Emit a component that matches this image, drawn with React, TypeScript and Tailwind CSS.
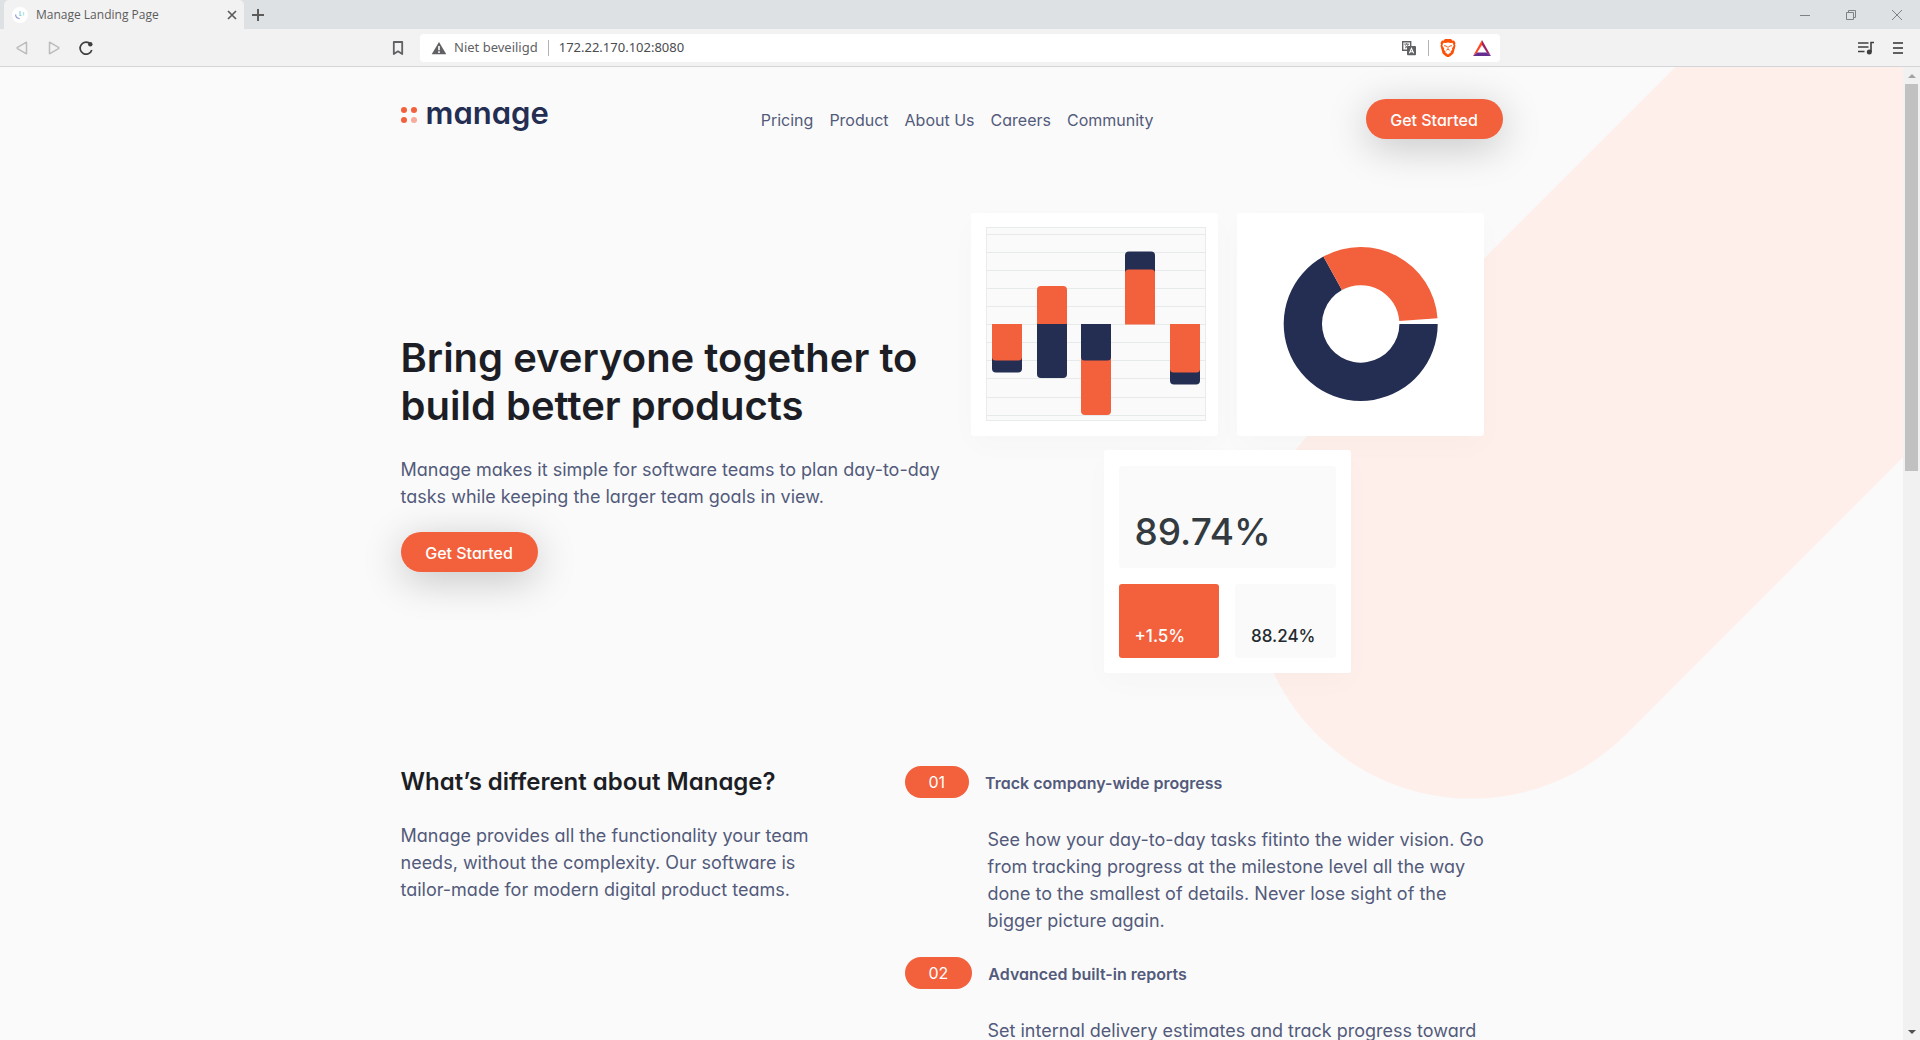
import type { ReactNode } from "react";

const NAV = ["Pricing", "Product", "About Us", "Careers", "Community"];

const GRID_LINES = [21, 39, 57, 75, 93, 111, 129, 147, 165, 184, 202];

const FEATURES = [
  {
    number: "01",
    title: "Track company-wide progress",
    lines: [
      "See how your day-to-day tasks fitinto the wider vision. Go",
      "from tracking progress at the milestone level all the way",
      "done to the smallest of details. Never lose sight of the",
      "bigger picture again.",
    ],
  },
  {
    number: "02",
    title: "Advanced built-in reports",
    lines: ["Set internal delivery estimates and track progress toward"],
  },
];

function Lines({ lines }: { lines: string[] }) {
  return (
    <>
      {lines.map((line) => (
        <span key={line} className="block whitespace-nowrap">
          {line}{" "}
        </span>
      ))}
    </>
  );
}

function TabStrip() {
  return (
    <div className="flex h-[29px] shrink-0 items-stretch bg-[#dee1e4] pl-1 text-[#5c5c5c]">
      <div className="flex w-60 items-center rounded-t-[5px] bg-[#f2f2f2] pr-1 pl-2">
        <svg className="size-4 shrink-0" viewBox="0 0 16 16" aria-hidden="true">
          <circle cx="8" cy="8" r="8" fill="#fff" />
          <path d="M3.500 7.500c.3 2.600 2 4 4.200 4.200" fill="none" stroke="#9aa3d8" strokeWidth="1.300" />
          <path d="M8 4v4.500h1.500" fill="none" stroke="#8fd0e6" strokeWidth="1.200" />
          <path d="M11.500 5v3.500" fill="none" stroke="#b5e6de" strokeWidth="1.400" />
        </svg>
        <span className="ml-2 flex-1 font-['Open_Sans',sans-serif] text-[12px] leading-4">Manage Landing Page</span>
        <button type="button" aria-label="Close tab" className="flex size-4 items-center justify-center">
          <svg className="size-[10px]" viewBox="0 0 10 10" stroke="currentColor" strokeWidth="1.700" aria-hidden="true">
            <path d="M1 1l8 8M9 1l-8 8" />
          </svg>
        </button>
      </div>
      <button type="button" aria-label="New tab" className="flex w-7 items-center justify-center">
        <svg className="size-3" viewBox="0 0 12 12" stroke="currentColor" strokeWidth="2" aria-hidden="true">
          <path d="M6 0v12M0 6h12" />
        </svg>
      </button>
      <div className="ml-auto flex text-[#7e8184]">
        <button type="button" aria-label="Minimize" className="flex w-[46px] items-center justify-center">
          <svg className="size-[10px]" viewBox="0 0 10 10" stroke="currentColor" aria-hidden="true">
            <path d="M0 5.500h10" />
          </svg>
        </button>
        <button type="button" aria-label="Restore" className="flex w-[46px] items-center justify-center">
          <svg className="size-[10px]" viewBox="0 0 10 10" fill="none" stroke="currentColor" aria-hidden="true">
            <path d="M.5 2.500h7v7h-7zM2.500 2.500v-2h7v7h-2" />
          </svg>
        </button>
        <button type="button" aria-label="Close window" className="flex w-[46px] items-center justify-center">
          <svg className="size-[10px]" viewBox="0 0 10 10" stroke="currentColor" aria-hidden="true">
            <path d="M0 0l10 10M10 0L0 10" />
          </svg>
        </button>
      </div>
    </div>
  );
}

function Toolbar() {
  return (
    <div className="grid h-[38px] shrink-0 grid-cols-[420px_1fr_420px] items-center border-b border-[#d3d5d8] bg-[#f2f2f2] font-['Noto_Sans',sans-serif] text-[13px] text-[#5f6164]">
      <div className="flex items-center pr-4 pl-4">
        <button type="button" aria-label="Back" className="text-[#bcbcbc]">
          <svg className="h-4 w-3" viewBox="0 0 12 16" fill="none" stroke="currentColor" strokeWidth="1.500" strokeLinejoin="round" aria-hidden="true">
            <path d="M10.500 2.200v11.600l-9-5.100q-.6-.7 0-1.400z" />
          </svg>
        </button>
        <button type="button" aria-label="Forward" className="ml-5 text-[#bcbcbc]">
          <svg className="h-4 w-3" viewBox="0 0 12 16" fill="none" stroke="currentColor" strokeWidth="1.500" strokeLinejoin="round" aria-hidden="true">
            <path d="M1.500 2.200v11.600l9-5.100q.6-.7 0-1.400z" />
          </svg>
        </button>
        <button type="button" aria-label="Reload" className="ml-[18px] text-[#3f3f3f]">
          <svg className="size-4" viewBox="0 0 16 16" fill="none" aria-hidden="true">
            <path d="M12.600 4.200A6 6 0 1 0 13.800 10" stroke="currentColor" strokeWidth="1.700" />
            <circle cx="12.300" cy="4.300" r="2.200" fill="currentColor" />
          </svg>
        </button>
        <button type="button" aria-label="Bookmark" className="ml-auto">
          <svg className="h-4 w-3" viewBox="0 0 12 16" fill="none" stroke="currentColor" strokeWidth="1.800" aria-hidden="true">
            <path d="M1.800 2h8.400v12L6 11.300 1.800 14z" strokeLinejoin="round" />
          </svg>
        </button>
      </div>
      <div className="flex h-7 items-center rounded bg-white pr-[9px] pl-[11px]">
        <svg className="h-[14px] w-4" viewBox="0 0 16 14" aria-hidden="true">
          <path d="M8 1l7.300 12.300H.7z" fill="#5f6164" />
          <path d="M8 5v4.200M8 10.200V12" stroke="#fff" strokeWidth="1.600" />
        </svg>
        <span className="ml-[7px]">Niet beveiligd</span>
        <span className="mx-[10px] h-4 w-px bg-[#b4b4b4]" />
        <input
          aria-label="Address"
          readOnly
          defaultValue="172.22.170.102:8080"
          className="min-w-0 flex-1 bg-transparent text-[#4a4c4f] outline-none"
        />
        <button type="button" aria-label="Translate">
          <svg className="size-4" viewBox="0 0 16 16" aria-hidden="true">
            <path d="M1.700 1.700h8v8.600h-8z" fill="#fff" stroke="#5f6164" strokeWidth="1.400" />
            <path d="M3.200 4.200h5M5.700 3v1.200M4 8c1.600-.6 2.600-1.800 3-3.600M4.400 5.400C5 6.800 6 7.500 7.600 8" fill="none" stroke="#5f6164" strokeWidth=".9" />
            <rect x="6" y="6" width="9" height="9.300" rx="1" fill="#5f6164" />
            <path d="M8.400 13.300l2.100-5 2.100 5M9.200 11.700h2.600" fill="none" stroke="#fff" strokeWidth="1.100" />
          </svg>
        </button>
        <span className="mx-[11px] h-4 w-px bg-[#b4b4b4]" />
        <button type="button" aria-label="Brave Shields">
          <svg className="h-[18px] w-4" viewBox="0 0 16 18" aria-hidden="true">
            <path d="M5 0h6l1.600 1.700 1.500-.2L15.500 4l-.5 1.500.5 1.200-2 7.600c-.3.900-3 2.700-4.100 3.400L8 18.300l-1.400-.6c-1.100-.7-3.800-2.500-4.100-3.400l-2-7.600L1 5.500.5 4l1.400-2.500 1.500.2z" fill="#fb5108" />
            <path d="M3.500 3.700l2 .4L8 3.400l2.500.7 2-.4 1.200 2.700-1.700 3.200.2 1.500-1.600 1.200.4 1L8 15.600l-2.800-2.300.4-1L4 11.100l.2-1.500-1.900-3.200z" fill="#fff" />
            <path d="M4 6.600l2.500.5-.4 1M12 6.600l-2.500.5.4 1M8 7v3M6.300 11.200L8 10.300l1.700.9" fill="none" stroke="#fb5108" strokeWidth=".9" />
          </svg>
        </button>
        <button type="button" aria-label="Brave Rewards" className="ml-[17px]">
          <svg className="h-4 w-[18px]" viewBox="0 0 18 16" aria-hidden="true">
            <path d="M9 0v5l-4.800 7.500L0 16z" fill="#ff4724" />
            <path d="M9 0l9 16-4.200-3.500L9 5z" fill="#9e1f63" />
            <path d="M0 16l4.200-3.500h9.600L18 16z" fill="#662d91" />
          </svg>
        </button>
      </div>
      <div className="flex items-center justify-end gap-[19px] pr-[17px]">
        <button type="button" aria-label="Media controls" className="text-[#3f3f3f]">
          <svg className="h-4 w-4" viewBox="0 0 16 16" aria-hidden="true">
            <path d="M0 3h10.500M0 7h10.500M0 11.500h6.500" stroke="currentColor" strokeWidth="1.700" />
            <path d="M16 2.500h-3V12" fill="none" stroke="currentColor" strokeWidth="1.600" />
            <circle cx="11.300" cy="12" r="2.500" fill="currentColor" />
          </svg>
        </button>
        <button type="button" aria-label="Menu">
          <svg className="h-4 w-[10px]" viewBox="0 0 10 16" stroke="currentColor" strokeWidth="2" aria-hidden="true">
            <path d="M0 3h10M0 8h10M0 13h10" />
          </svg>
        </button>
      </div>
    </div>
  );
}

function PillButton() {
  return (
    <button
      type="button"
      className="h-10 min-w-[137px] rounded-full bg-[#f3603c] px-6 pt-px text-[16px] leading-6 font-medium text-white shadow-[0_8px_40px_rgba(0,0,0,0.22)]"
    >
      Get Started
    </button>
  );
}

function SiteHeader() {
  return (
    <header className="flex h-10 items-center justify-between">
      <a href="#home" className="flex items-center gap-2 pb-2 text-[#242d52]">
        <svg className="h-4 w-[17px]" viewBox="0 0 17 16" aria-hidden="true">
          <circle cx="3" cy="3" r="3" fill="#f3603c" />
          <circle cx="13" cy="3" r="3" fill="#f3603c" />
          <circle cx="3" cy="13" r="3" fill="#f3603c" />
          <circle cx="13" cy="13" r="3" fill="#f8ab9a" />
        </svg>
        <span className="-mt-1 text-[31px] leading-8 font-semibold">manage</span>
      </a>
      <nav>
        <ul className="flex gap-4 pt-px text-[16px] leading-6">
          {NAV.map((item) => (
            <li key={item}>
              <a href={"#" + item.toLowerCase().replace(" ", "-")}>{item}</a>
            </li>
          ))}
        </ul>
      </nav>
      <PillButton />
    </header>
  );
}

function Card({ children }: { children: ReactNode }) {
  return (
    <div className="h-[223px] w-[247px] shrink-0 rounded-[3px] bg-white shadow-[0_10px_30px_rgba(0,0,0,0.02)]">
      {children}
    </div>
  );
}

function BarChart() {
  return (
    <svg className="h-full w-full" viewBox="0 0 247 223" role="img" aria-label="Bar chart">
      <rect x="15.500" y="14.500" width="219" height="193" fill="#fafafa" stroke="#e9ecec" />
      {GRID_LINES.map((y) => (
        <path key={y} d={`M16 ${y + 0.5}h218`} stroke="#e7eaea" />
      ))}
      <rect x="21" y="130" width="30" height="29.500" rx="4" fill="#242d52" />
      <path d="M21 111h30v33q0 3.500-3.500 3.500h-23q-3.500 0-3.500-3.500z" fill="#f3603c" />
      <path d="M66 111V77q0-4 4-4h22q4 0 4 4v34z" fill="#f3603c" />
      <path d="M66 111h30v50q0 4-4 4H70q-4 0-4-4z" fill="#242d52" />
      <rect x="110" y="130" width="30" height="72" rx="4" fill="#f3603c" />
      <path d="M110 111h30v33q0 3.500-3.500 3.500h-23q-3.500 0-3.500-3.500z" fill="#242d52" />
      <rect x="154" y="38.500" width="30" height="40" rx="4" fill="#242d52" />
      <path d="M154 111.500V60q0-3.500 3.500-3.500h23q3.500 0 3.500 3.500v51.500z" fill="#f3603c" />
      <rect x="199" y="140" width="30" height="31.500" rx="4" fill="#242d52" />
      <path d="M199 111h30v45q0 3.500-3.500 3.500h-23q-3.500 0-3.500-3.500z" fill="#f3603c" />
    </svg>
  );
}

function Donut() {
  return (
    <svg className="h-full w-full" viewBox="0 0 247 223" role="img" aria-label="Donut chart">
      <g transform="translate(123.700 111)">
        <path d="M77 0A77 77 0 1 1-37.300-67.400L-18.800-33.900A38.700 38.700 0 1 0 38.700 0z" fill="#242d52" />
        <path d="M-37.300-67.400A77 77 0 0 1 76.800-5.800L38.600-3A38.700 38.700 0 0 0-18.800-33.900z" fill="#f3603c" />
      </g>
    </svg>
  );
}

function Stats() {
  return (
    <div className="flex h-full flex-col gap-4 px-[15px] pt-4 pb-[15px] font-medium">
      <div className="flex h-[102px] items-end rounded-[3px] bg-[#fafafa] px-4 pb-3 text-[37px] leading-[48px] text-[#333a40]">
        89.74%
      </div>
      <div className="grid flex-1 grid-cols-2 gap-4 text-[17px] leading-6">
        <div className="flex items-end rounded-[3px] bg-[#f3603c] px-4 pb-[10px] text-white">+1.5%</div>
        <div className="flex items-end rounded-[3px] bg-[#fafafa] px-4 pb-[10px] text-[#242a2e]">88.24%</div>
      </div>
    </div>
  );
}

function Hero() {
  return (
    <section className="mt-[74px] flex items-start justify-between pr-[19px]">
      <div className="pt-[121px]">
        <h1 className="text-[40px] leading-[48px] font-semibold text-[#1d1e25]">
          <Lines lines={["Bring everyone together to", "build better products"]} />
        </h1>
        <p className="mt-[26px] text-[18px] leading-[27px]">
          <Lines
            lines={[
              "Manage makes it simple for software teams to plan day-to-day",
              "tasks while keeping the larger team goals in view.",
            ]}
          />
        </p>
        <div className="mt-[22px]">
          <PillButton />
        </div>
      </div>
      <div className="flex w-[513px] shrink-0 flex-wrap justify-center gap-x-[19px] gap-y-[14px]">
        <Card>
          <BarChart />
        </Card>
        <Card>
          <Donut />
        </Card>
        <Card>
          <Stats />
        </Card>
      </div>
    </section>
  );
}

function Features() {
  return (
    <section className="mt-[93px] grid grid-cols-[504px_1fr]">
      <div>
        <h2 className="text-[24px] leading-8 font-semibold text-[#1d1e25]">What’s different about Manage?</h2>
        <p className="mt-6 text-[18px] leading-[27px]">
          <Lines
            lines={[
              "Manage provides all the functionality your team",
              "needs, without the complexity. Our software is",
              "tailor-made for modern digital product teams.",
            ]}
          />
        </p>
      </div>
      <div className="flex flex-col gap-[15px]">
        {FEATURES.map((feature) => (
          <article key={feature.number}>
            <div className="flex items-center gap-4">
              <span className="h-8 rounded-full bg-[#f3603c] px-6 pt-1 text-[16px] leading-6 text-white">
                {feature.number}
              </span>
              <h3 className="pt-px text-[16px] leading-6 font-semibold">{feature.title}</h3>
            </div>
            <p className="mt-7 pb-2 pl-[83px] text-[18px] leading-[27px]">
              <Lines lines={feature.lines} />
            </p>
          </article>
        ))}
      </div>
    </section>
  );
}

function Scrollbar() {
  return (
    <div className="flex w-[17px] shrink-0 flex-col bg-[#f1f1f1]">
      <div className="flex h-[17px] items-center justify-center">
        <svg className="h-1 w-2" viewBox="0 0 8 4" aria-hidden="true">
          <path d="M4 0l4 4H0z" fill="#a3a3a3" />
        </svg>
      </div>
      <div className="flex-1 px-[2px]">
        <div className="h-[387px] bg-[#c1c1c1]" />
      </div>
      <div className="flex h-[17px] items-center justify-center">
        <svg className="h-1 w-2" viewBox="0 0 8 4" aria-hidden="true">
          <path d="M0 0h8L4 4z" fill="#505050" />
        </svg>
      </div>
    </div>
  );
}

export default function App() {
  return (
    <div className="flex h-screen flex-col overflow-hidden">
      <TabStrip />
      <Toolbar />
      <div className="flex min-h-0 flex-1">
        <main className="relative flex-1 overflow-hidden bg-[#fafafa] font-[Inter,sans-serif] text-[#535a7b] [font-feature-settings:'cv11']">
          <div className="absolute -top-[442px] -right-[92px] h-[1300px] w-[437px] rotate-45 rounded-full bg-[#ffefeb]" />
          <div className="relative mx-auto max-w-[1102px] pt-8">
            <SiteHeader />
            <Hero />
            <Features />
          </div>
        </main>
        <Scrollbar />
      </div>
    </div>
  );
}
